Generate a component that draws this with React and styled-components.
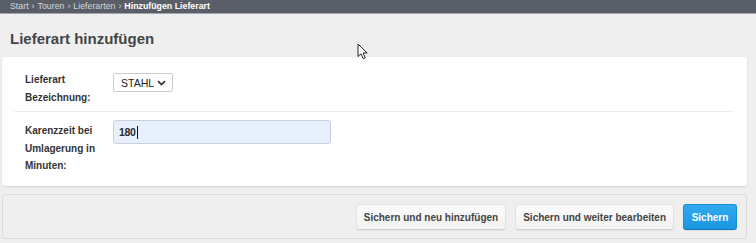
import React from "react";
import styled, { createGlobalStyle } from "styled-components";

const GlobalStyle = createGlobalStyle`
  html, body {
    margin: 0;
    padding: 0;
    background: #efefef;
    font-family: "Liberation Sans", Arial, sans-serif;
    color: #333;
  }
  * {
    box-sizing: border-box;
  }
`;

const crumbs = ["Start", "Touren", "Lieferarten"];

export default function App() {
  return (
    <>
      <GlobalStyle />
      <Page>
        <TopBar>
          {crumbs.map((c) => (
            <React.Fragment key={c}>
              <Crumb>{c}</Crumb>
              <Sep>›</Sep>
            </React.Fragment>
          ))}
          <Crumb $current>Hinzufügen Lieferart</Crumb>
        </TopBar>

        <Content>
          <Title>Lieferart hinzufügen</Title>

          <Card>
            <FormRow $first>
              <Label>Lieferart Bezeichnung:</Label>
              <SelectBox>
                <span>STAHL</span>
                <svg width="9" height="6" viewBox="0 0 9 6">
                  <path
                    d="M1 1.2 L4.5 4.6 L8 1.2"
                    fill="none"
                    stroke="#333"
                    strokeWidth="1.7"
                  />
                </svg>
              </SelectBox>
            </FormRow>
            <FormRow>
              <Label $pad>Karenzzeit bei Umlagerung in Minuten:</Label>
              <TextField>
                180
                <Caret />
              </TextField>
            </FormRow>
          </Card>

          <SubmitRow>
            <Button>Sichern und neu hinzufügen</Button>
            <Button>Sichern und weiter bearbeiten</Button>
            <Button $primary>Sichern</Button>
          </SubmitRow>
        </Content>

        <Pointer width="12" height="17" viewBox="0 0 12 17">
          <path
            d="M1 1 L1 13.5 L4 10.8 L6.3 15.8 L8.3 14.9 L6.1 10 L10.2 10 Z"
            fill="#fff"
            stroke="#222"
            strokeWidth="1"
            strokeLinejoin="round"
          />
        </Pointer>
      </Page>
    </>
  );
}

const Page = styled.div`
  position: relative;
  width: 756px;
  height: 243px;
  overflow: hidden;
  background: #efefef;
`;

const TopBar = styled.div`
  height: 14px;
  background: #5a5f67;
  border-bottom: 1px solid #a3a7ad;
  padding: 0 10px;
  display: flex;
  align-items: center;
  font-size: 8.8px;
  line-height: 13px;
  color: #cfd3d8;
  white-space: nowrap;
`;

const Crumb = styled.span`
  font-weight: ${(p) => (p.$current ? "bold" : "normal")};
  color: ${(p) => (p.$current ? "#ffffff" : "#d2d6db")};
`;

const Sep = styled.span`
  margin: 0 3px;
  color: #d2d6db;
`;

const Content = styled.div`
  padding: 0 9px 0 2px;
`;

const Title = styled.h1`
  margin: 16px 0 9px 8px;
  font-size: 15px;
  line-height: 18px;
  font-weight: bold;
  color: #454545;
`;

const Card = styled.div`
  background: #fff;
  border-radius: 3px;
  box-shadow: 0 1px 2px rgba(0, 0, 0, 0.12);
  padding: 0 13px 13px 12px;
  height: 129px;
`;

const FormRow = styled.div`
  display: flex;
  align-items: flex-start;
  gap: 10px;
  padding: ${(p) => (p.$first ? "14px 0 5px 11px" : "8px 0 0 11px")};
  border-bottom: ${(p) => (p.$first ? "1px solid #ececec" : "none")};
`;

const Label = styled.label`
  width: 78px;
  flex-shrink: 0;
  font-size: 10px;
  line-height: 17.5px;
  font-weight: bold;
  color: #333;
  padding-top: ${(p) => (p.$pad ? "2px" : "0")};
`;

const SelectBox = styled.div`
  margin-top: 2px;
  height: 19px;
  width: 60px;
  border: 1px solid #cdcdcd;
  border-radius: 2px;
  background: #fff;
  display: flex;
  align-items: center;
  justify-content: space-between;
  padding: 0 6px 0 7px;
  font-size: 10.5px;
  color: #222;

  svg {
    margin-top: 1px;
  }
`;

const TextField = styled.div`
  width: 218px;
  height: 24px;
  border: 1px solid #c6cfdb;
  border-radius: 3px;
  background: #e8f0fe;
  display: flex;
  align-items: center;
  padding: 0 5px;
  font-size: 10.5px;
  font-weight: bold;
  letter-spacing: -0.3px;
  color: #2a2a2a;
`;

const Caret = styled.span`
  display: inline-block;
  width: 1px;
  height: 13px;
  margin-left: 1px;
  background: #111;
`;

const SubmitRow = styled.div`
  margin-top: 8px;
  height: 45px;
  border: 1px solid #dcdcdc;
  border-radius: 3px;
  background: #efefef;
  display: flex;
  justify-content: flex-end;
  align-items: flex-start;
  gap: 9px;
  padding: 9px 9px 0 0;
`;

const Button = styled.button`
  height: 26px;
  padding: 0 7px;
  border-radius: 3px;
  font-family: inherit;
  font-size: 10px;
  font-weight: bold;
  cursor: pointer;
  color: ${(p) => (p.$primary ? "#fff" : "#444")};
  border: 1px solid ${(p) => (p.$primary ? "#1a8fd6" : "#e2e2e2")};
  border-bottom-color: ${(p) => (p.$primary ? "#1478b8" : "#d2d2d2")};
  background: ${(p) =>
    p.$primary
      ? "linear-gradient(#31aaf0, #1996e2)"
      : "linear-gradient(#fafafa, #f3f3f3)"};
  box-shadow: 0 1px 1px rgba(0, 0, 0, 0.06);
  min-width: ${(p) => (p.$primary ? "54px" : "auto")};
`;

const Pointer = styled.svg`
  position: absolute;
  left: 357px;
  top: 43px;
`;
